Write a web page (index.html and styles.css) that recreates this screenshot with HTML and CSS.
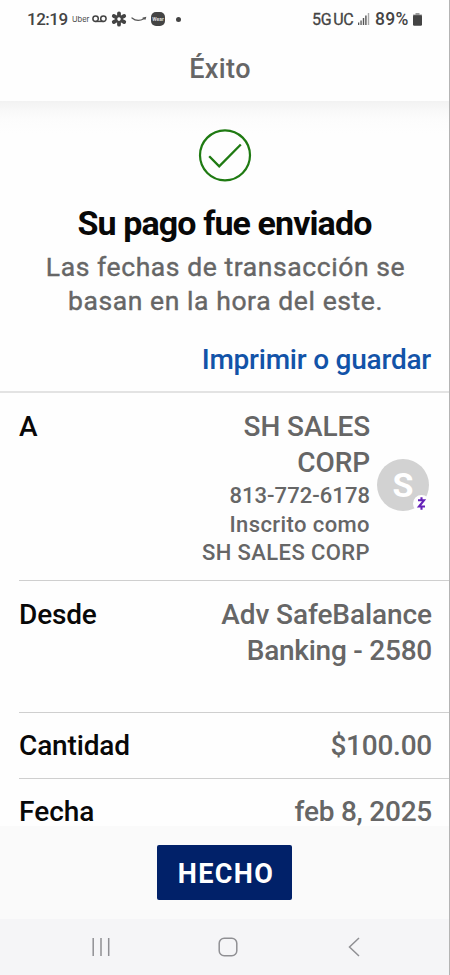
FILE: index.html
```html
<!DOCTYPE html>
<html lang="es">
<head>
<meta charset="utf-8">
<meta name="viewport" content="width=device-width, initial-scale=1">
<title>Éxito</title>
<link rel="stylesheet" href="styles.css">
</head>
<body>
<div class="screen">
  <div class="status">
    <span class="clock">12:19</span>
    <span class="uber">Uber</span>
    <svg class="voicemail" width="15" height="8" viewBox="0 0 15 8" fill="none" stroke="#444" stroke-width="1.5"><circle cx="3.6" cy="3.7" r="2.7"/><circle cx="11.4" cy="3.7" r="2.7"/><path d="M3.6 6.4h7.8"/></svg>
    <svg class="flower" width="16" height="16" viewBox="-8 -8 16 16" fill="none" stroke="#444" stroke-width="3.8" stroke-linecap="round"><path d="M0-3.6V-5.7M0 3.600V5.700M3.100-1.800L5.200-3M-3.100 1.800L-5.200 3M3.100 1.800L5.200 3M-3.100-1.800L-5.200-3"/><circle r="2.900" stroke-width="1.700"/></svg>
    <svg class="smile" width="16" height="6" viewBox="0 0 16 6" fill="none" stroke="#555" stroke-width="1.200" stroke-linecap="round"><path d="M1 2C4.500 5 9 5 13 2.800M12 2L14.500 1.600L14 3.200"/></svg>
    <span class="wear">Wear</span>
    <span class="dot"></span>
    <span class="network">5G<span class="uc">UC</span></span>
    <svg class="signal" width="12" height="12" viewBox="0 0 12 12" fill="#555"><path d="M0 9.500h1.300V12H0zM2.400 7.500h1.300V12H2.400zM4.800 5h1.400v7H4.800zM7.200 2.500h1.400V12H7.200z"/><path fill="#aaa" d="M9.800 0h1.400v12H9.800z"/></svg>
    <span class="percent">89%</span>
    <svg class="battery" width="9" height="13" viewBox="0 0 9 13"><path fill="#999" d="M2.500 0h4v1.500H9V4H0V1.500h2.500z"/><rect y="2.200" width="9" height="10.500" rx="1.200" fill="#444"/></svg>
  </div>
  <header class="header"><h1>Éxito</h1></header>
  <main class="content">
    <svg class="check" width="54" height="54" viewBox="0 0 54 54" fill="none" stroke="#1f7a12" stroke-width="2.200"><circle cx="27" cy="27.300" r="25"/><path stroke-linecap="square" stroke-width="2.300" d="M12 29.100L21.200 38.300L42 17.300"/></svg>
    <h2 class="title">Su pago fue enviado</h2>
    <p class="note">Las fechas de transacción se<br>basan en la hora del este.</p>
    <a class="print">Imprimir o guardar</a>
    <div class="rows">
      <div class="row row-to">
        <span class="label">A</span>
        <div class="payee">
          <div class="value name">SH SALES<br>CORP</div>
          <div class="small phone">813-772-6178</div>
          <div class="small enrolled">Inscrito como</div>
          <div class="small company">SH SALES CORP</div>
        </div>
        <div class="avatar">S
          <svg class="zelle" width="17" height="17" viewBox="0 0 17 17"><circle cx="8.500" cy="8.500" r="8.500" fill="#fefefe"/><path d="M5 5.300H11L6 11.500H12M8.500 2.300V5.300M8.500 11.500V14.700" fill="none" stroke="#6420b8" stroke-width="2.100"/></svg>
        </div>
      </div>
      <div class="row row-from">
        <span class="label">Desde</span>
        <div class="value"><span class="account">Adv SafeBalance</span><br>Banking - 2580</div>
      </div>
      <div class="row row-amount">
        <span class="label">Cantidad</span>
        <div class="value">$100.00</div>
      </div>
      <div class="row row-date">
        <span class="label date-label">Fecha</span>
        <div class="value">feb 8, 2025</div>
      </div>
    </div>
  </main>
  <footer class="footer"><button class="done">HECHO</button></footer>
  <nav class="nav">
    <svg width="18" height="20" viewBox="0 0 18 20" fill="none" stroke="#909094" stroke-width="1.500"><path d="M1.200 1v18M9 1v18M16.700 1v18"/></svg>
    <svg class="home" width="20" height="20" viewBox="0 0 20 20" fill="none" stroke="#909094" stroke-width="1.500"><rect x="1.200" y="1.200" width="17.600" height="17.600" rx="5"/></svg>
    <svg width="12" height="20" viewBox="0 0 12 20" fill="none" stroke="#909094" stroke-width="1.500"><path d="M11 1L1.500 10L11 19"/></svg>
  </nav>
</div>
</body>
</html>
```

FILE: styles.css
```css
* { box-sizing: border-box; }
body { margin: 0; background: #fff; font-family: Roboto, "Liberation Sans", sans-serif; }
h1, h2, p { margin: 0; }
svg { display: block; flex: none; }
.screen {
  width: 450px; height: 975px;
  display: flex; flex-direction: column;
  border-right: 1px solid #b4b4b4; background: #fefefe;
  white-space: nowrap;
}

.status { height: 38px; flex: none; display: flex; align-items: center; padding-left: 27px; color: #444; }
.clock { width: 45px; font-size: 17px; font-weight: 500; letter-spacing: -0.5px; }
.uber { width: 20px; font: 7.5px Inter, sans-serif; }
.voicemail { margin-right: 4px; }
.flower { margin-right: 4px; }
.smile { margin-right: 4px; }
.wear {
  width: 14px; height: 14px; border-radius: 5px; background: #444; color: #ddd;
  font-size: 5px; line-height: 14px; text-align: center; font-weight: 700;
}
.dot { width: 5px; height: 5px; border-radius: 50%; background: #444; margin-left: 11px; }
.network { margin-left: 131px; width: 45px; font-size: 16px; letter-spacing: -0.3px; -webkit-text-stroke: 0.3px #444; }
.uc { margin-left: 2px; }
.signal { margin-left: 1px; }
.percent { margin-left: 5px; width: 38px; font-size: 17.5px; font-weight: 500; letter-spacing: 0.3px; }

.header { height: 63px; flex: none; display: flex; align-items: center; justify-content: center; padding: 0 9px 2px 0; }
.header h1 { font-size: 27px; line-height: 36px; font-weight: 500; color: #666; letter-spacing: 0.4px; }

.content {
  height: 725px; flex: none;
  display: flex; flex-direction: column; align-items: center;
  padding-top: 27px;
  background: linear-gradient(#f2f2f2, #f8f8f8 9px, #fcfcfc 18px, #fefefe 32px);
}
.title { margin-top: 21px; font-size: 34px; line-height: 40px; font-weight: 700; color: #080808; letter-spacing: -0.9px; }
.note { margin-top: 7px; padding-left: 2px; font-size: 26.5px; line-height: 34px; color: #666; text-align: center; letter-spacing: 0.58px; -webkit-text-stroke: 0.4px #666; }
.print { align-self: flex-end; margin: 25px 18px 14px 0; font-size: 28px; line-height: 34px; font-weight: 500; color: #1253a8; letter-spacing: -0.22px; }

.rows { width: 100%; border-top: 2px solid #e3e3e3; }
.row { margin-left: 19px; padding: 16px 17px 0 0; display: flex; border-bottom: 1px solid #cfcfcf; }
.label { flex: 1; font-size: 28px; line-height: 36px; font-weight: 500; color: #080808; letter-spacing: -0.15px; }
.value { font-size: 28px; line-height: 36px; font-weight: 500; color: #666; text-align: right; letter-spacing: -0.24px; }
.name { letter-spacing: -0.1px; }
.account { letter-spacing: -0.08px; }
.small { font-size: 22px; line-height: 28px; font-weight: 500; color: #666; letter-spacing: 0.4px; }
.payee { text-align: right; margin-right: 7px; }
.phone { line-height: 29px; letter-spacing: 0.05px; }
.enrolled { line-height: 29px; }
.row-to { height: 188px; padding-top: 15.5px; padding-right: 20px; }
.avatar {
  position: relative; width: 52px; height: 52px; margin-top: 50.5px; border-radius: 50%;
  background: #d2d2d2; color: #fff; text-align: center;
  font: 700 34px/53px Roboto, sans-serif;
}
.zelle { position: absolute; right: -1px; bottom: -1px; }
.row-from { height: 132px; }
.row-amount { height: 66px; padding-top: 15px; }
.row-date { height: 47px; padding-top: 15px; border: 0; }
.date-label { letter-spacing: 0; }

.footer { height: 93px; flex: none; background: #fafafa; display: flex; justify-content: center; align-items: flex-start; padding-top: 19px; }
.done {
  width: 135px; height: 55px; padding: 2px 0 0 3px; border: 0; border-radius: 2px;
  background: #012169; color: #fff; font: 700 27px/36px Roboto, sans-serif; letter-spacing: 1.4px;
}
.nav { height: 56px; flex: none; background: #f5f5f7; display: flex; align-items: center; justify-content: space-between; padding: 0 89px 1px 92px; }
.home { margin-right: 3px; }
```
